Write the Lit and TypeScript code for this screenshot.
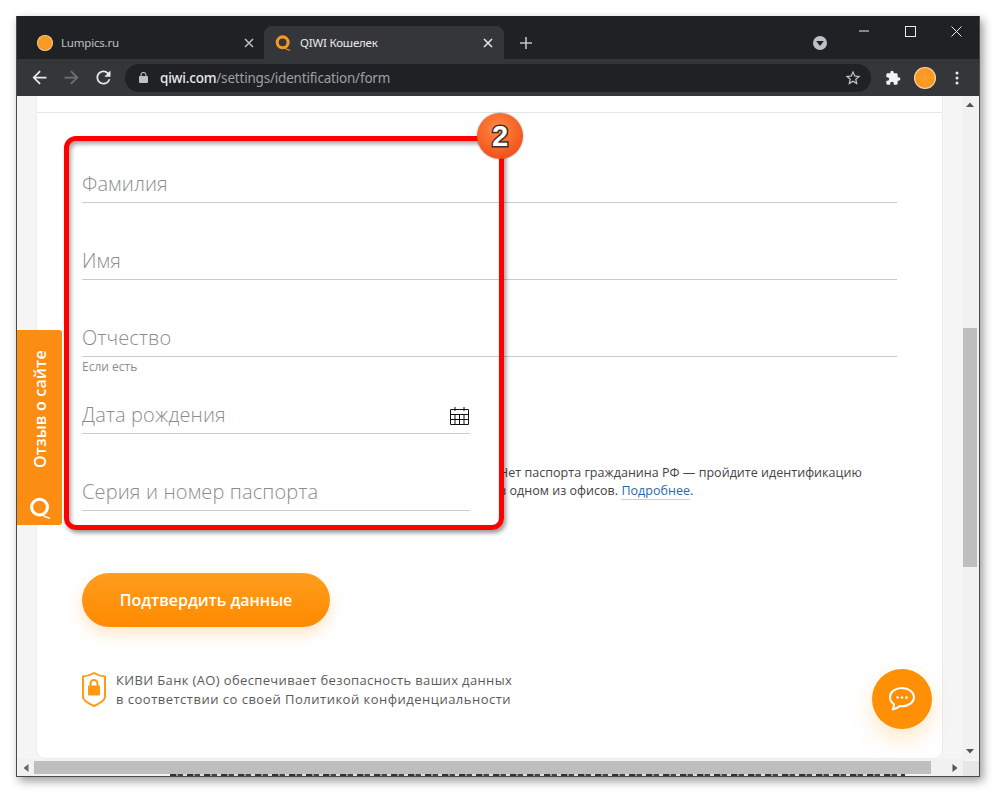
import { LitElement, html, css } from "lit";
import { customElement } from "lit/decorators.js";

const qLogo = (color: string, size: number, ring: number, radius: number) => html`<svg class="ico" width=${size} height=${size} viewBox="0 0 24 24" fill="none">
  <circle cx="11.5" cy="11" r=${radius} stroke=${color} stroke-width=${ring}/>
  <path d="M14 19 Q17 22 22 23" stroke=${color} stroke-width="1.6" stroke-linecap="round"/>
</svg>`;

const citrus = (size: number) => html`<svg class="ico" width=${size} height=${size} viewBox="0 0 24 24">
  <circle cx="12" cy="12" r="12" fill="#ffd9a8"/>
  <circle cx="12" cy="12" r="10.8" fill="#f9981f"/>
  <path d="M12 2v20M2 12h20M5 5l14 14M19 5L5 19" stroke="#fba640" stroke-width=".7"/>
</svg>`;

@customElement("app-root")
export class AppRoot extends LitElement {
  static styles = css`
    :host { display: block; width: 996px; height: 793px; background: #fff; padding: 16px 16px 16px 16px; box-sizing: border-box; font-family: "Open Sans", "Noto Sans", sans-serif; overflow: hidden; }
    * { box-sizing: border-box; }
    .win { width: 964px; height: 761px; display: flex; flex-direction: column; background: #202124; border: 1px solid #4a4a4a; border-top: 0; box-shadow: 3px 4px 9px rgba(0,0,0,.4); }

    .strip { height: 43px; background: #202124; display: flex; flex: none; }
    .tab { height: 33px; align-self: flex-end; display: flex; align-items: center; font-family: "Noto Sans", "Open Sans", sans-serif; font-size: 11.5px; letter-spacing: -.2px; }
    .tab.one { width: 247px; padding: 0 10px 0 20px; gap: 8px; color: #bdc1c6; }
    .tab.two { width: 240px; padding: 0 11px 0 11px; gap: 9px; color: #e8eaed; background: #35363a; border-radius: 8px 8px 0 0; }
    .tab .x { margin-left: auto; display: block; }
    .ico { display: block; flex: none; }
    .plus { align-self: flex-end; height: 33px; margin-left: 15px; display: flex; align-items: center; }
    .media { align-self: flex-end; height: 33px; margin-left: 280px; display: flex; align-items: center; }
    .controls { margin-left: auto; display: flex; height: 30px; }
    .controls div { width: 46px; height: 30px; display: flex; align-items: center; justify-content: center; }

    .tools { height: 37px; flex: none; background: #35363a; display: flex; align-items: center; padding-left: 12px; }
    .tools .back { margin-right: 11px; }
    .omni { width: 746px; height: 28px; margin-left: 11px; background: #202124; border-radius: 14px; display: flex; align-items: center; padding: 0 9px 0 14px; font-family: "Noto Sans", "Open Sans", sans-serif; font-size: 13.5px; letter-spacing: -.2px; color: #9aa0a6; }
    .omni .lock { margin-right: 12px; }
    .omni b { font-weight: 500; color: #e8eaed; }
    .omni .star { margin-left: auto; }
    .puzzle { margin-left: 14px; }
    .avatar { margin-left: 13px; }
    .dots { margin-left: 19px; }

    .page { position: relative; flex: 1; display: grid; grid-template-columns: 946px 16px; grid-template-rows: 663px 17px; background: #f5f5f5; overflow: hidden; }
    .view { overflow: hidden; padding: 0 21px 0 20px; }
    .card { width: 905px; height: 662px; background: #fff; border-radius: 0 0 8px 8px; box-shadow: 0 0 0 1px #ececec; padding: 0 45px; color: #333; }
    .head { height: 17px; margin: 0 -45px; border-bottom: 1px solid #e6e6e6; }
    .field { height: 77px; display: flex; align-items: flex-end; justify-content: space-between; border-bottom: 1px solid #cbcbcb; padding-bottom: 5px; font-size: 20px; line-height: 26px; font-weight: 300; color: #8c8c8c; letter-spacing: .14px; }
    .field.first { margin-top: 13px; }
    .field.short { height: 57px; }
    .field .ico { margin-bottom: 2px; }
    .hint { height: 20px; font-size: 12px; line-height: 20px; color: #8c8c8c; font-weight: 400; }
    .split { display: flex; }
    .col { width: 388px; flex: none; }
    .note { margin: 87px 0 0 29px; font-size: 12.5px; line-height: 18px; color: #444; white-space: nowrap; letter-spacing: .03px; }
    .note a { color: #2a6aa8; border-bottom: 1px solid #bcd3e8; text-decoration: none; }
    .btn { margin-top: 62px; width: 248px; height: 54px; padding-bottom: 1px; border-radius: 27px; display: flex; align-items: center; justify-content: center; color: #fff; font-size: 16px; font-weight: 600; letter-spacing: -.05px; background: linear-gradient(#ff9d1e, #ff8a00); box-shadow: 0 7px 16px rgba(255,140,0,.22); }
    .safe { margin-top: 44px; display: flex; gap: 10px; font-size: 13px; line-height: 19px; color: #5a5a5a; letter-spacing: .36px; white-space: nowrap; }
    .safe svg { margin-top: 1px; }
    .safe .wide { letter-spacing: .49px; }

    .vbar { background: #f1f1f1; display: flex; flex-direction: column; grid-column: 2; grid-row: 1; }
    .arrow { width: 14px; height: 17px; display: flex; align-items: center; justify-content: center; flex: none; }
    .vthumb { width: 14px; height: 239px; margin-top: 215px; background: #bebebe; }
    .down { margin-top: auto; }
    .hwrap { grid-column: 1; grid-row: 2; background: #f1f1f1; display: flex; flex-direction: column; padding-top: 2px; }
    .hbar { height: 13px; flex: none; display: flex; align-items: center; }
    .hbar .arrow { width: 17px; height: 13px; }
    .hthumb { width: 897px; height: 13px; background: #bebebe; }
    .right { margin-left: auto; }
    .under { height: 2px; margin-left: 153px; width: 735px; background: repeating-linear-gradient(90deg, #333 0 6px, #999 6px 8px, #444 8px 13px, #ddd 13px 17px); }
    .corner { grid-column: 2; grid-row: 2; background: #e6e6e6; margin-top: 2px; }

    .frame { position: absolute; left: 47px; top: 40px; width: 440px; height: 394px; border: 5px solid #f00; border-radius: 12px; box-shadow: 2px 3px 4px rgba(0,0,0,.4), inset 2px 3px 4px rgba(0,0,0,.35); pointer-events: none; }
    .badge { position: absolute; left: 460px; top: 17px; width: 46px; height: 46px; border-radius: 50%; background: radial-gradient(circle at 45% 35%, #ff8a45, #f2561d 70%, #d9481a); box-shadow: 0 0 2px rgba(0,0,0,.45); display: flex; align-items: center; justify-content: center; font-family: "Liberation Sans", sans-serif; font-weight: 700; font-size: 29px; color: #fff; -webkit-text-stroke: 3px #3a3028; paint-order: stroke fill; }
    .feedback { position: absolute; left: 0; top: 234px; width: 45px; height: 195px; background: #fb8d12; border-radius: 0 3px 3px 0; display: flex; flex-direction: column; align-items: center; }
    .feedback span { writing-mode: vertical-rl; transform: rotate(180deg); color: #fff; font-size: 16px; font-weight: 600; letter-spacing: .2px; height: 116px; margin-top: 22px; line-height: 44px; text-align: center; white-space: nowrap; }
    .feedback i { display: block; margin-top: 29px; }
    .chat { position: absolute; left: 855px; top: 573px; width: 60px; height: 60px; border-radius: 50%; background: #ff8f05; box-shadow: 0 10px 22px rgba(255,150,0,.22); display: flex; align-items: center; justify-content: center; }
  `;

  render() {
    const tri = (d: string) => html`<svg class="ico" width="10" height="8" viewBox="0 0 10 8"><path d=${d} fill="#555"/></svg>`;
    return html`<div class="win">
      <div class="strip">
        <div class="tab one">
          ${citrus(16)}<span>Lumpics.ru</span>
          <svg class="ico x" width="10" height="10" viewBox="0 0 10 10"><path d="M1 1l8 8M9 1L1 9" stroke="#bdc1c6" stroke-width="1.5"/></svg>
        </div>
        <div class="tab two">
          ${qLogo("#f59a23", 16, 4.6, 8.2)}<span>QIWI Кошелек</span>
          <svg class="ico x" width="10" height="10" viewBox="0 0 10 10"><path d="M1 1l8 8M9 1L1 9" stroke="#e8eaed" stroke-width="1.5"/></svg>
        </div>
        <div class="plus"><svg class="ico" width="14" height="14" viewBox="0 0 14 14"><path d="M7 1v12M1 7h12" stroke="#bdc1c6" stroke-width="1.6"/></svg></div>
        <div class="media"><svg class="ico" width="14" height="14" viewBox="0 0 14 14"><circle cx="7" cy="7" r="7" fill="#bdc1c6"/><path d="M3.2 5h7.6L7 10z" fill="#202124"/></svg></div>
        <div class="controls">
          <div><svg class="ico" width="12" height="2" viewBox="0 0 12 2"><path d="M1 1h10" stroke="#e8eaed"/></svg></div>
          <div><svg class="ico" width="11" height="11" viewBox="0 0 11 11"><rect x=".5" y=".5" width="10" height="10" fill="none" stroke="#e8eaed"/></svg></div>
          <div><svg class="ico" width="11" height="11" viewBox="0 0 11 11"><path d="M.5.5l10 10M10.5.5l-10 10" stroke="#e8eaed"/></svg></div>
        </div>
      </div>
      <div class="tools">
        <svg class="ico back" width="21" height="21" viewBox="0 0 24 24"><path d="M20 11H7.83l5.59-5.59L12 4l-8 8 8 8 1.41-1.41L7.83 13H20v-2z" fill="#e8eaed"/></svg>
        <svg class="ico back" width="21" height="21" viewBox="0 0 24 24"><path d="M4 11h12.17l-5.59-5.59L12 4l8 8-8 8-1.41-1.41L16.17 13H4v-2z" fill="#6f7174"/></svg>
        <svg class="ico" width="21" height="21" viewBox="0 0 24 24"><path d="M17.65 6.35A7.958 7.958 0 0 0 12 4c-4.42 0-7.99 3.58-7.99 8s3.57 8 7.99 8c3.73 0 6.84-2.55 7.73-6h-2.08A5.99 5.99 0 0 1 12 18c-3.31 0-6-2.69-6-6s2.69-6 6-6c1.66 0 3.14.69 4.22 1.78L13 11h7V4l-2.35 2.35z" fill="#e8eaed"/></svg>
        <div class="omni">
          <svg class="ico lock" width="9" height="11" viewBox="0 0 9 11"><path d="M2 4.5V3a2.5 2.5 0 0 1 5 0v1.5" fill="none" stroke="#bdc1c6" stroke-width="1.1"/><rect y="4" width="9" height="7" rx="1" fill="#bdc1c6"/></svg>
          <span><b>qiwi.com</b>/settings/identification/form</span>
          <svg class="ico star" width="18" height="18" viewBox="0 0 24 24"><path d="M22 9.24l-7.19-.62L12 2 9.19 8.63 2 9.24l5.46 4.73L5.82 21 12 17.27 18.18 21l-1.63-7.03L22 9.24zM12 15.4l-3.76 2.27 1-4.28-3.32-2.88 4.38-.38L12 6.1l1.71 4.04 4.38.38-3.32 2.88 1 4.28L12 15.4z" fill="#c4c7c5"/></svg>
        </div>
        <svg class="ico puzzle" width="16" height="16" viewBox="0 0 24 24"><path d="M20.5 11H19V7c0-1.1-.9-2-2-2h-4V3.5C13 2.12 11.88 1 10.5 1S8 2.12 8 3.5V5H4c-1.1 0-1.99.9-1.99 2v3.8H3.5c1.49 0 2.7 1.21 2.7 2.7s-1.21 2.7-2.7 2.7H2V20c0 1.1.9 2 2 2h3.8v-1.5c0-1.49 1.21-2.7 2.7-2.7 1.49 0 2.7 1.21 2.7 2.7V22H17c1.1 0 2-.9 2-2v-4h1.5c1.38 0 2.5-1.12 2.5-2.5S21.88 11 20.5 11z" fill="#f1f3f4"/></svg>
        <div class="avatar">${citrus(22)}</div>
        <svg class="ico dots" width="4" height="14" viewBox="0 0 4 14"><circle cx="2" cy="2" r="1.5" fill="#e8eaed"/><circle cx="2" cy="7" r="1.5" fill="#e8eaed"/><circle cx="2" cy="12" r="1.5" fill="#e8eaed"/></svg>
      </div>
      <div class="page">
        <div class="view">
          <div class="card">
            <div class="head"></div>
            <div class="field first">Фамилия</div>
            <div class="field">Имя</div>
            <div class="field">Отчество</div>
            <div class="hint">Если есть</div>
            <div class="split">
              <div class="col">
                <div class="field short">Дата рождения
                  <svg class="ico" width="20" height="19" viewBox="0 0 20 19" fill="none" stroke="#111" stroke-width="1"><path d="M.5 2.5h18v15H.5zM.5 7.5h18M.5 12.5h18M5 7.5v10M9.5 7.5v10M14 7.5v10M5 0v4M14 0v4"/></svg>
                </div>
                <div class="field">Серия и номер паспорта</div>
              </div>
              <div class="note">Нет паспорта гражданина РФ — пройдите идентификацию<br>в одном из офисов. <a>Подробнее</a>.</div>
            </div>
            <div class="btn">Подтвердить данные</div>
            <div class="safe">
              <svg class="ico" width="24" height="35" viewBox="0 0 24 35" fill="none"><path d="M1 4.5Q7 4 12 1q5 3 11 3.5v20.5Q23 29 12 34 1 29 1 25z" stroke="#ff9a14" stroke-width="2"/><rect x="6" y="13.5" width="12" height="10" rx="1" fill="#ff9a14"/><path d="M8.5 14v-2.5a3.5 3.5 0 0 1 7 0V14" stroke="#ff9a14" stroke-width="2"/></svg>
              <div>КИВИ Банк (АО) обеспечивает безопасность ваших данных<br><span class="wide">в соответствии со своей Политикой конфиденциальности</span></div>
            </div>
          </div>
        </div>
        <div class="vbar">
          <div class="arrow">${tri("M5 1.5L9 6H1z")}</div>
          <div class="vthumb"></div>
          <div class="arrow down">${tri("M5 6.5L1 2h8z")}</div>
        </div>
        <div class="hwrap">
          <div class="hbar">
            <div class="arrow"><svg class="ico" width="8" height="10" viewBox="0 0 8 10"><path d="M1.5 5L6.5 1v8z" fill="#666"/></svg></div>
            <div class="hthumb"></div>
            <div class="arrow right"><svg class="ico" width="8" height="10" viewBox="0 0 8 10"><path d="M6.5 5L1.5 9V1z" fill="#555"/></svg></div>
          </div>
          <div class="under"></div>
        </div>
        <div class="corner"></div>

        <div class="frame"></div>
        <div class="badge">2</div>
        <div class="feedback">
          <span>Отзыв о сайте</span>
          <i>${qLogo("#fff", 22, 3.4, 8.6)}</i>
        </div>
        <div class="chat">
          <svg class="ico" width="28" height="26" viewBox="0 0 28 26" fill="none"><path d="M14 2C7.4 2 2 6 2 11.3c0 2.9 1.6 5.4 4.1 7.1-.2 1.8-.7 3.4-1.4 5 2.6-.5 5-1.7 7-3.3.7.1 1.5.2 2.3.2 6.6 0 12-4 12-9S20.6 2 14 2z" stroke="#fff" stroke-width="2" stroke-linejoin="round"/><circle cx="9.5" cy="11.5" r="1.3" fill="#fff"/><circle cx="14" cy="11.5" r="1.3" fill="#fff"/><circle cx="18.5" cy="11.5" r="1.3" fill="#fff"/></svg>
        </div>
      </div>
    </div>`;
  }
}
